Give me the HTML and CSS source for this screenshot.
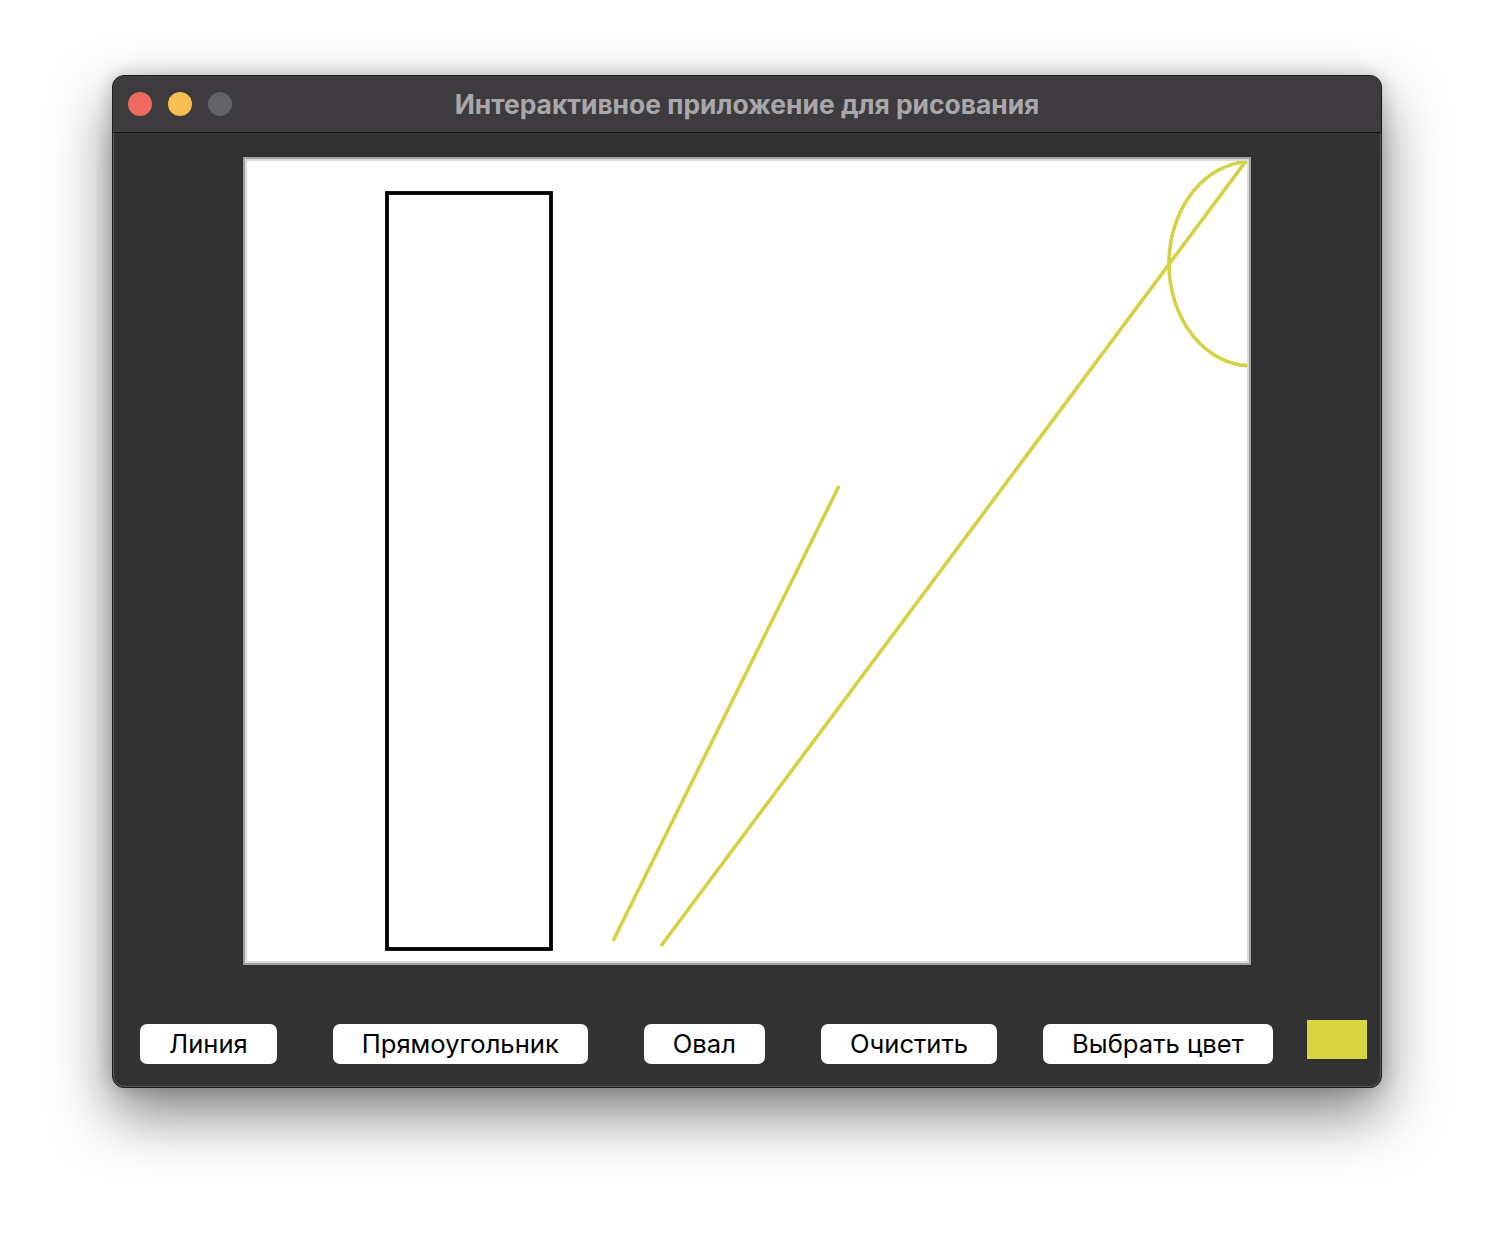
FILE: index.html
```html
<!DOCTYPE html>
<html lang="ru">
<head>
<meta charset="utf-8">
<title>Интерактивное приложение для рисования</title>
<link rel="stylesheet" href="styles.css">
</head>
<body>
<div class="stage">
  <div class="window">
    <div class="titlebar">
      <div class="lights">
        <span class="light red"></span>
        <span class="light yellow"></span>
        <span class="light grey"></span>
      </div>
      <div class="title">Интерактивное приложение для рисования</div>
    </div>
    <div class="content">
      <div class="canvas-frame">
        <svg class="canvas" width="1000" height="800" viewBox="0 0 1000 800">
          <rect x="140" y="32" width="164" height="756" fill="none" stroke="#000" stroke-width="3.8"/>
          <line x1="366" y1="780" x2="592" y2="325" stroke="#d4d244" stroke-width="3.6"/>
          <line x1="414" y1="785" x2="999" y2="0" stroke="#d4d244" stroke-width="3.6"/>
          <ellipse cx="1004" cy="102.7" rx="82" ry="102" fill="none" stroke="#d4d244" stroke-width="3.6"/>
        </svg>
      </div>
      <div class="toolbar">
        <button class="btn">Линия</button>
        <button class="btn">Прямоугольник</button>
        <button class="btn">Овал</button>
        <button class="btn">Очистить</button>
        <button class="btn btn-near">Выбрать цвет</button>
        <span class="swatch"></span>
      </div>
    </div>
  </div>
</div>
</body>
</html>
```
FILE: styles.css
```css
html, body {
  margin: 0;
  padding: 0;
  background: #ffffff;
}
body {
  width: 1494px;
  height: 1236px;
  overflow: hidden;
  font-family: Inter, "Liberation Sans", "Noto Sans", sans-serif;
}
.stage {
  padding: 75px 0 0 112px;
}
.window {
  width: 1270px;
  height: 1013px;
  box-sizing: border-box;
  border-radius: 12px;
  background: #323232;
  border: 1px solid #1c1c1c;
  box-shadow: inset 0 0 0 1px #5a5a5a, 0 26px 60px rgba(0, 0, 0, 0.5), 0 0 18px rgba(0, 0, 0, 0.2);
  overflow: hidden;
  display: flex;
  flex-direction: column;
}
.titlebar {
  height: 56px;
  background: #3d3b3e;
  border-bottom: 1px solid #151515;
  display: flex;
  align-items: center;
  position: relative;
  flex: none;
}
.lights {
  display: flex;
  gap: 16px;
  padding-left: 15px;
}
.light {
  width: 24px;
  height: 24px;
  border-radius: 50%;
  display: block;
}
.red { background: #ee6a5f; }
.yellow { background: #f5be4f; }
.grey { background: #636265; }
.title {
  position: absolute;
  left: 0;
  right: 0;
  top: 0;
  bottom: 0;
  display: flex;
  align-items: center;
  justify-content: center;
  color: #a9a7aa;
  font-weight: 700;
  font-size: 26.4px;
}
.content {
  flex: 1;
  display: flex;
  flex-direction: column;
  align-items: center;
}
.canvas-frame {
  margin-top: 24px;
  border: 2px solid #a0a0a0;
  background: #dcdcdc;
  padding: 2px;
  display: flex;
}
.canvas {
  display: block;
  background: #ffffff;
  overflow: hidden;
}
.toolbar {
  align-self: stretch;
  display: flex;
  align-items: flex-start;
  padding-left: 27px;
  margin-top: 55px;
}
.btn {
  margin-top: 4px;
  margin-right: 56px;
  height: 40px;
  padding: 0 29px;
  border: none;
  border-radius: 7px;
  background: #ffffff;
  color: #000000;
  font-family: Inter, "Liberation Sans", "Noto Sans", sans-serif;
  font-size: 25.6px;
  line-height: 40px;
}
.btn-near {
  margin-left: -10px;
  margin-right: 34px;
}
.swatch {
  width: 60px;
  height: 39px;
  background: #d8d545;
  display: block;
}
```
